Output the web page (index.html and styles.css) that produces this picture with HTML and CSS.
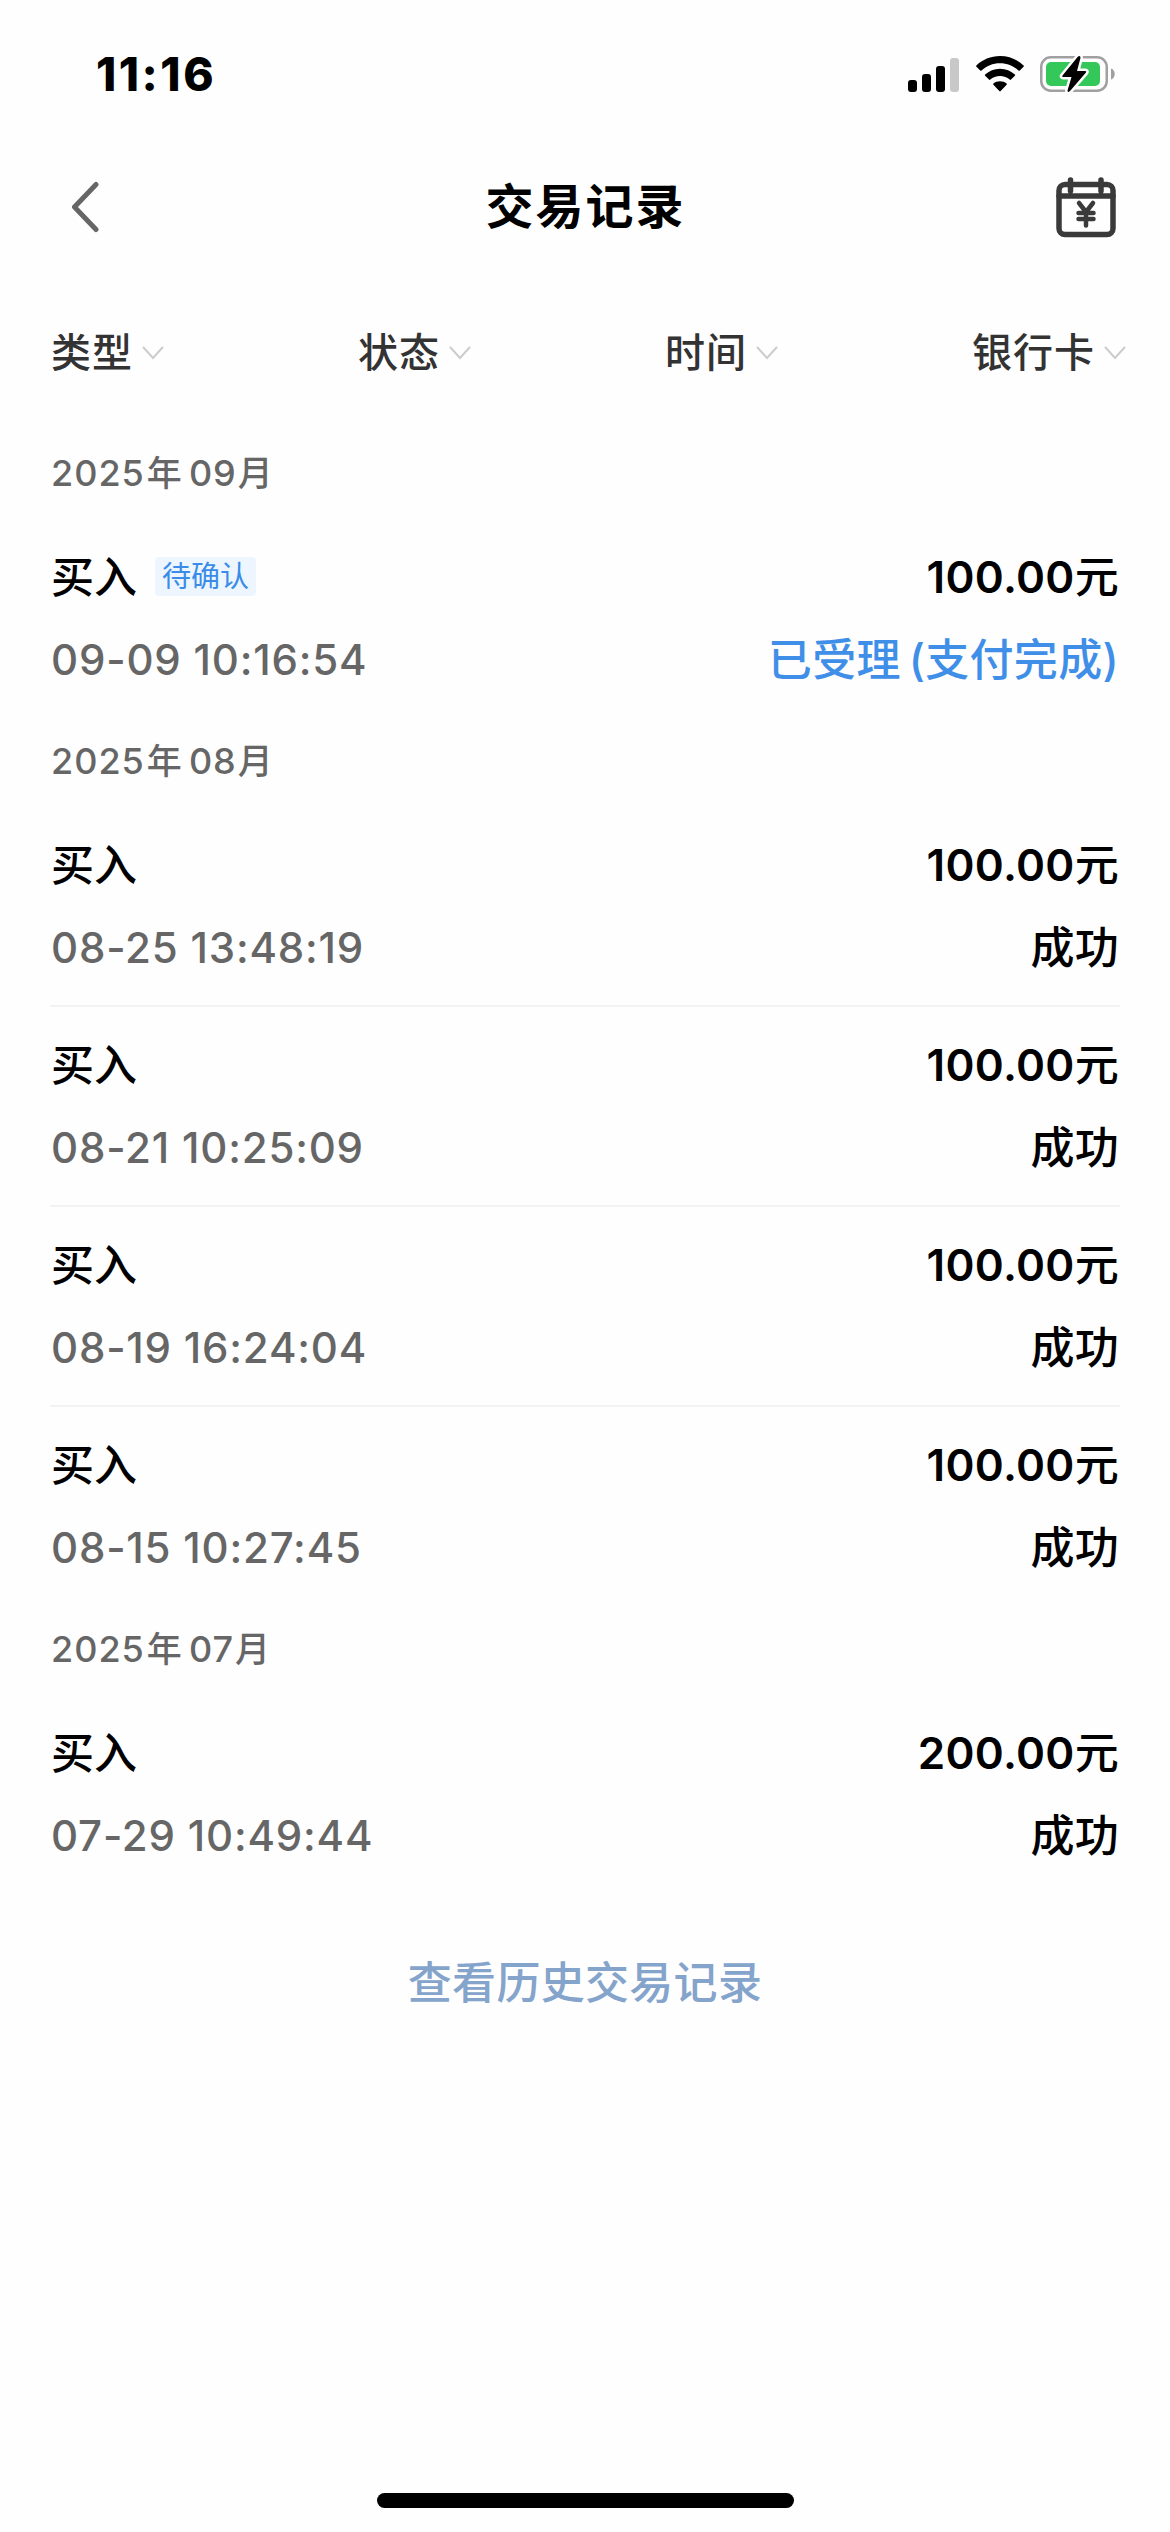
FILE: index.html
```html
<!DOCTYPE html>
<html lang="zh-CN">
<head>
<meta charset="utf-8">
<title>交易记录</title>
<link rel="stylesheet" href="styles.css">
</head>
<body>
<div class="screen">
  <header class="status-bar">
    <span class="clock">11:16</span>
    <div class="indicators">
      <svg class="signal" width="52" height="40" viewBox="0 0 52 40">
        <rect x="0" y="26" width="9" height="12" rx="3"/>
        <rect x="14" y="20" width="9" height="18" rx="3"/>
        <rect x="28" y="12" width="9" height="26" rx="3"/>
        <rect x="42" y="4" width="9" height="34" rx="3" fill="#c8c8c8"/>
      </svg>
      <svg class="wifi" width="48" height="40" viewBox="0 0 48 40">
        <path d="M24 2C14.8 2 6.400 5.600 .4 11.400Q-.2 12 .4 12.700L4.200 16.500Q4.900 17.100 5.500 16.500C10.400 11.900 16.900 9.200 24 9.200S37.600 11.900 42.500 16.500Q43.100 17.100 43.800 16.500L47.600 12.700Q48.200 12 47.600 11.400C41.600 5.600 33.200 2 24 2Z"/>
        <path d="M24 14.800C18.200 14.800 13 17 9.100 20.600Q8.500 21.200 9.100 21.800L13 25.600Q13.600 26.200 14.300 25.600C16.900 23.300 20.300 22 24 22S31.100 23.300 33.700 25.600Q34.400 26.200 35 25.600L38.900 21.800Q39.500 21.200 38.900 20.600C35 17 29.800 14.800 24 14.800Z"/>
        <path d="M24 27.200C21.500 27.200 19.200 28 17.400 29.500Q16.800 30.100 17.400 30.700L23.300 36.900Q24 37.600 24.700 36.900L30.600 30.700Q31.200 30.100 30.600 29.500C28.800 28 26.500 27.200 24 27.200Z"/>
      </svg>
      <svg class="battery" width="76" height="40" viewBox="0 0 76 40">
        <rect x="1.250" y="3.250" width="65.500" height="33.500" rx="9.500" fill="none" stroke="#a0a0a3" stroke-width="2.500"/>
        <path d="M71 14.500C76 16 76 24 71 25.500Z" fill="#a0a0a3"/>
        <rect x="6" y="8" width="54" height="24" rx="5" fill="#34c759"/>
        <path d="M38 2.500L22.500 21.500Q21.500 23 23.300 23H31.500L27.500 36.500Q27.500 39 30 37L46 18.500Q47 17 45.200 17H37L40.500 4Q40.500 1 38 2.500Z" stroke="#fff" stroke-width="5" paint-order="stroke" stroke-linejoin="round"/>
      </svg>
    </div>
  </header>

  <nav class="nav-bar">
    <svg class="back" width="28" height="52" viewBox="0 0 28 52"><path d="M25 3.500L3.500 26L25 48.500"/></svg>
    <h1 class="title">交易记录</h1>
    <svg class="calendar" width="60" height="62" viewBox="0 0 60 62">
      <rect x="3" y="8.500" width="54" height="50" rx="6"/>
      <path d="M3 20H57M14.500 4V15M45 4V15"/>
      <path class="yen" d="M23 27L30 36L37 27M30 36V49.500M22.500 37H37.500M22.500 43H37.500"/>
    </svg>
  </nav>

  <div class="filters">
    <div class="filter">类型<svg class="caret" width="22" height="14" viewBox="0 0 22 14"><path d="M1.500 1.500L11 12L20.500 1.500"/></svg></div>
    <div class="filter">状态<svg class="caret" width="22" height="14" viewBox="0 0 22 14"><path d="M1.500 1.500L11 12L20.500 1.500"/></svg></div>
    <div class="filter">时间<svg class="caret" width="22" height="14" viewBox="0 0 22 14"><path d="M1.500 1.500L11 12L20.500 1.500"/></svg></div>
    <div class="filter">银行卡<svg class="caret" width="22" height="14" viewBox="0 0 22 14"><path d="M1.500 1.500L11 12L20.500 1.500"/></svg></div>
  </div>

  <main class="records">
    <section>
      <h2 class="month">2025<span class="year">年</span>09<span class="mon">月</span></h2>
      <div class="record">
        <div class="line"><span class="kind">买入</span><span class="badge">待确认</span><span class="amount">100.00<span class="unit">元</span></span></div>
        <div class="line"><span class="date">09-09 10:16:54</span><span class="state pending">已受理<span class="paren">(</span>支付完成)</span></div>
      </div>
    </section>
    <section>
      <h2 class="month">2025<span class="year">年</span>08<span class="mon">月</span></h2>
      <div class="record">
        <div class="line"><span class="kind">买入</span><span class="amount">100.00<span class="unit">元</span></span></div>
        <div class="line"><span class="date">08-25 13:48:19</span><span class="state">成功</span></div>
      </div>
      <div class="record">
        <div class="line"><span class="kind">买入</span><span class="amount">100.00<span class="unit">元</span></span></div>
        <div class="line"><span class="date">08-21 10:25:09</span><span class="state">成功</span></div>
      </div>
      <div class="record">
        <div class="line"><span class="kind">买入</span><span class="amount">100.00<span class="unit">元</span></span></div>
        <div class="line"><span class="date">08-19 16:24:04</span><span class="state">成功</span></div>
      </div>
      <div class="record">
        <div class="line"><span class="kind">买入</span><span class="amount">100.00<span class="unit">元</span></span></div>
        <div class="line"><span class="date">08-15 10:27:45</span><span class="state">成功</span></div>
      </div>
    </section>
    <section>
      <h2 class="month">2025<span class="year">年</span>07<span class="mon">月</span></h2>
      <div class="record">
        <div class="line"><span class="kind">买入</span><span class="amount">200.00<span class="unit">元</span></span></div>
        <div class="line"><span class="date">07-29 10:49:44</span><span class="state">成功</span></div>
      </div>
    </section>
  </main>

  <a class="history">查看历史交易记录</a>
  <div class="home-indicator"></div>
</div>
</body>
</html>
```
FILE: styles.css
```css
* { box-sizing: border-box; }

body {
  margin: 0;
  background: #fefefe;
  color: #000;
  font-family: "Inter", "Noto Sans CJK SC", sans-serif;
  font-weight: 500;
}

svg { display: block; flex: none; }

.screen {
  display: flex;
  flex-direction: column;
  width: 1170px;
  height: 2532px;
  padding-bottom: 24px;
}

.status-bar {
  display: flex;
  justify-content: space-between;
  align-items: center;
  height: 148px;
  padding: 0 54px 0 96px;
}

.clock {
  font-size: 46px;
  line-height: 60px;
  font-weight: 800;
  letter-spacing: 2.5px;
}

.indicators {
  display: flex;
  gap: 16px;
}

.nav-bar {
  display: grid;
  grid-template-columns: 1fr auto 1fr;
  align-items: center;
  height: 117px;
  padding: 0 54px 0 71px;
}

.back path {
  fill: none;
  stroke: #666;
  stroke-width: 5;
  stroke-linecap: round;
  stroke-linejoin: round;
}

.title {
  margin: 0 16px 0 0;
  font-size: 48px;
  line-height: 60px;
  font-weight: 700;
  letter-spacing: 2px;
}

.calendar {
  justify-self: end;
  fill: none;
  stroke: #3a3a3a;
  stroke-width: 5.5;
  stroke-linecap: round;
}

.calendar .yen { stroke-width: 4.5; }

.filters {
  display: grid;
  grid-template-columns: repeat(3, 307px) auto;
  height: 166px;
  padding-left: 51px;
}

.filter {
  display: flex;
  align-items: center;
  gap: 9px;
  height: 169px;
  color: #333;
  font-size: 40px;
  letter-spacing: 1px;
}

.caret {
  margin-top: 6px;
  fill: none;
  stroke: #ccc;
  stroke-width: 2;
  stroke-linecap: round;
}

.records { padding: 0 50px; }

.month {
  height: 88px;
  margin: 0;
  padding-left: 1px;
  color: #666;
  font-size: 36px;
  line-height: 85px;
  font-weight: 500;
  letter-spacing: 1px;
}

.year, .mon { font-size: 35px; }

.year { margin: 0 6px 0 2px; }

.mon { margin-left: 1px; }

.record {
  height: 200px;
  padding: 17px 1px;
  border-bottom: 2px solid #f3f3f3;
}

.record:last-child { border-bottom-color: transparent; }

.line {
  display: flex;
  align-items: center;
  height: 82px;
}

.kind {
  margin-top: -7px;
  font-size: 43px;
}

.badge {
  margin: -2px 0 0 18px;
  padding: 0 7px;
  border-radius: 4px;
  background: #edf6ff;
  color: #3a8ce8;
  font-size: 29px;
  line-height: 39px;
  font-weight: 400;
}

.amount, .state {
  margin-left: auto;
  font-size: 44px;
}

.amount {
  margin-top: -7px;
  font-weight: 600;
  letter-spacing: .3px;
}

.unit { font-weight: 500; }

.state {
  margin-top: -4px;
  letter-spacing: .3px;
}

.pending { color: #3f8fe8; }

.paren { margin-left: 8px; }

.date {
  color: #666;
  font-size: 42px;
  letter-spacing: .8px;
}

.history {
  margin-top: 58px;
  color: #84a4cb;
  font-size: 44px;
  line-height: 60px;
  letter-spacing: .3px;
  text-align: center;
}

.home-indicator {
  align-self: center;
  width: 417px;
  height: 15px;
  margin-top: auto;
  border-radius: 8px;
  background: #000;
}
```
